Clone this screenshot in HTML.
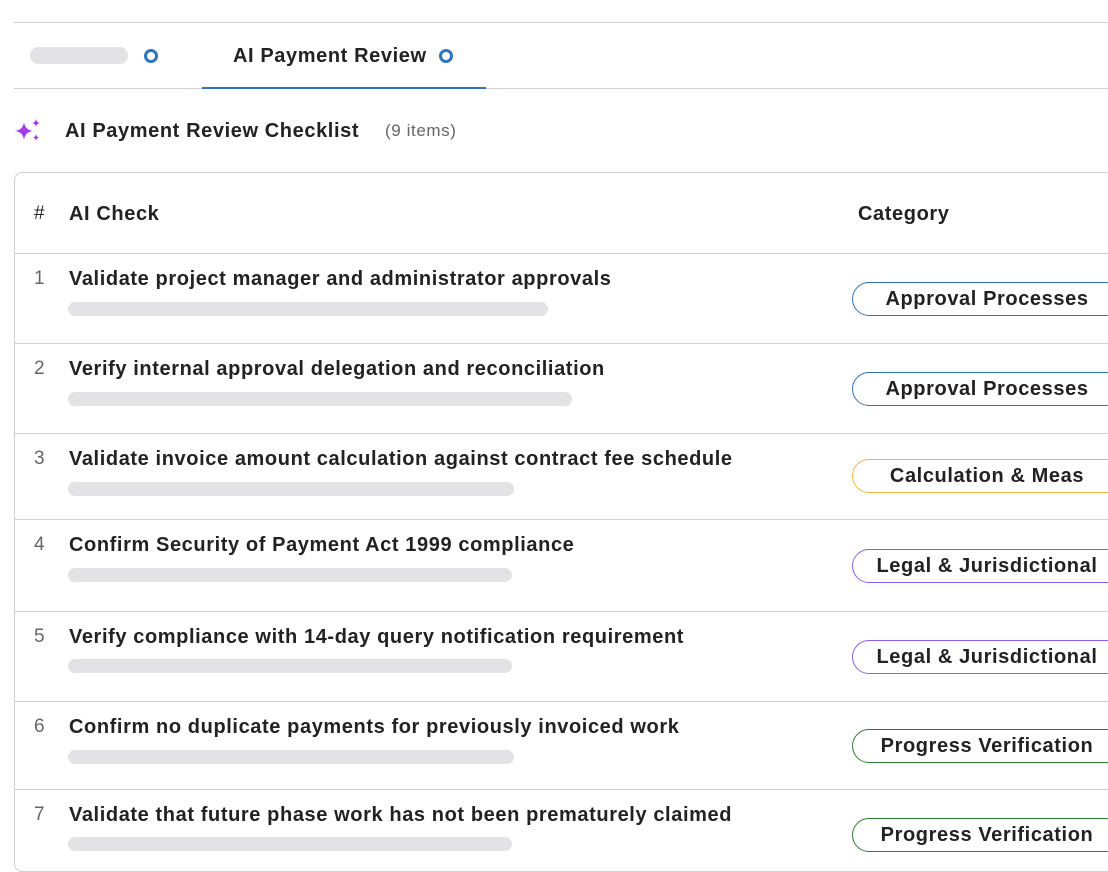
<!DOCTYPE html>
<html><head><style>
*{margin:0;padding:0;box-sizing:border-box}
body{width:1108px;height:856px;overflow:hidden;background:#fff;font-family:"Liberation Sans",Arial,sans-serif;color:#222;position:relative}
.a{position:absolute}
.hl{position:absolute;height:1px;background:#cfcfcf}
.t{position:absolute;left:69px;font-size:20px;font-weight:bold;color:#222;line-height:24px;white-space:nowrap;letter-spacing:0.6px}
.n{position:absolute;left:34px;font-size:19px;color:#666;line-height:24px}
.bar{position:absolute;left:68px;height:14px;border-radius:7px;background:#e3e3e6}
.b{position:absolute;left:852px;width:280px;height:34px;border:1px solid;border-radius:17px;font-size:20px;font-weight:bold;color:#222;line-height:32px;white-space:nowrap;letter-spacing:0.6px}
.b span{position:absolute;left:0;width:268px;text-align:center}
.blue{border-color:#2f74c0}.or{border-color:#f5b342}.pu{border-color:#8b5cf6}.gr{border-color:#2e7d32}
</style></head><body>
<div class="hl" style="left:14px;top:22px;width:1094px"></div>
<div class="a" style="left:30px;top:47px;width:98px;height:17px;border-radius:9px;background:#e3e3e6"></div>
<div class="a" style="left:144px;top:49px;width:14px;height:14px;border:3px solid #2f74c0;border-radius:50%"></div>
<div class="a" style="left:233px;top:44px;font-size:20px;font-weight:bold;line-height:24px;letter-spacing:0.6px">AI Payment Review</div>
<div class="a" style="left:439px;top:49px;width:14px;height:14px;border:3px solid #2f74c0;border-radius:50%"></div>
<div class="hl" style="left:14px;top:88px;width:1094px"></div>
<div class="a" style="left:202px;top:87px;width:284px;height:2px;background:#2f74c0"></div>
<svg class="a" style="left:14px;top:118px" width="28" height="26" viewBox="0 0 28 26"><path d="M10 4 Q11 12 19 13 Q11 14 10 22 Q9 14 1 13 Q9 12 10 4Z" fill="#a33be8"/><path d="M22 1 Q22.5 4.5 26 5 Q22.5 5.5 22 9 Q21.5 5.5 18 5 Q21.5 4.5 22 1Z" fill="#a33be8"/><path d="M22 16 Q22.5 19 25 19.5 Q22.5 20 22 23 Q21.5 20 19 19.5 Q21.5 19 22 16Z" fill="#a33be8"/></svg>
<div class="a" style="left:65px;top:119px;font-size:20px;font-weight:bold;line-height:24px;letter-spacing:0.6px">AI Payment Review Checklist</div>
<div class="a" style="left:385px;top:121px;font-size:17px;color:#666;line-height:20px;letter-spacing:0.6px">(9 items)</div>
<div class="a" style="left:14px;top:172px;width:1110px;height:700px;border:1px solid #cfcfcf;border-radius:8px"></div>
<div class="a" style="left:34px;top:202px;font-size:19px;line-height:24px">#</div>
<div class="a" style="left:69px;top:202px;font-size:20px;font-weight:bold;line-height:24px;letter-spacing:0.6px">AI Check</div>
<div class="a" style="left:858px;top:202px;font-size:20px;font-weight:bold;line-height:24px;letter-spacing:0.6px">Category</div>
<div class="hl" style="left:15px;top:253px;width:1093px"></div>
<div class="hl" style="left:15px;top:343px;width:1093px"></div>
<div class="hl" style="left:15px;top:433px;width:1093px"></div>
<div class="hl" style="left:15px;top:519px;width:1093px"></div>
<div class="hl" style="left:15px;top:611px;width:1093px"></div>
<div class="hl" style="left:15px;top:701px;width:1093px"></div>
<div class="hl" style="left:15px;top:789px;width:1093px"></div>

<div class="n" style="top:267px">1</div><div class="t" style="top:267px">Validate project manager and administrator approvals</div><div class="bar" style="top:302px;width:480px"></div><div class="b blue" style="top:282px"><span>Approval Processes</span></div>
<div class="n" style="top:357px">2</div><div class="t" style="top:357px">Verify internal approval delegation and reconciliation</div><div class="bar" style="top:392px;width:504px"></div><div class="b blue" style="top:372px"><span>Approval Processes</span></div>
<div class="n" style="top:447px">3</div><div class="t" style="top:447px">Validate invoice amount calculation against contract fee schedule</div><div class="bar" style="top:482px;width:446px"></div><div class="b or" style="top:459px"><span>Calculation &amp; Meas</span></div>
<div class="n" style="top:533px">4</div><div class="t" style="top:533px">Confirm Security of Payment Act 1999 compliance</div><div class="bar" style="top:568px;width:444px"></div><div class="b pu" style="top:549px"><span>Legal &amp; Jurisdictional</span></div>
<div class="n" style="top:625px">5</div><div class="t" style="top:625px">Verify compliance with 14-day query notification requirement</div><div class="bar" style="top:659px;width:444px"></div><div class="b pu" style="top:640px"><span>Legal &amp; Jurisdictional</span></div>
<div class="n" style="top:715px">6</div><div class="t" style="top:715px">Confirm no duplicate payments for previously invoiced work</div><div class="bar" style="top:750px;width:446px"></div><div class="b gr" style="top:729px"><span>Progress Verification</span></div>
<div class="n" style="top:803px">7</div><div class="t" style="top:803px">Validate that future phase work has not been prematurely claimed</div><div class="bar" style="top:837px;width:444px"></div><div class="b gr" style="top:818px"><span>Progress Verification</span></div>
</body></html>
